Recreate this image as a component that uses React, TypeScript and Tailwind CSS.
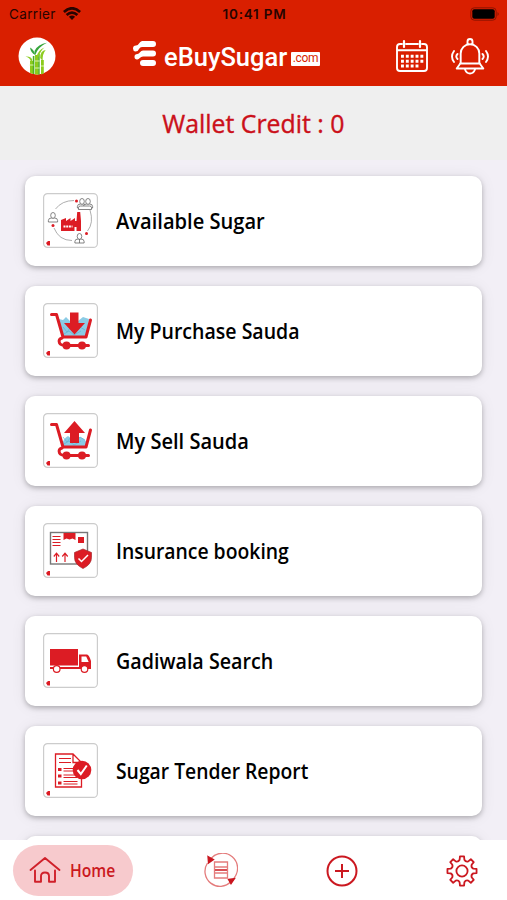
import type { ReactNode } from "react";

const RED = "#dc1c24";

function Wifi() {
  return (
    <svg width="18" height="14" viewBox="0 0 18 14" fill="none" stroke="#270400" strokeWidth="2.7">
      <path d="M.9 4.9Q9-2.3 17.1 4.9M3.6 8Q9 3.2 14.4 8" />
      <path d="M5.9 9.7Q9 7.1 12.1 9.7L9 13Z" fill="#270400" stroke="none" />
    </svg>
  );
}

function Battery() {
  return (
    <svg width="30" height="14" viewBox="0 0 30 14">
      <rect x=".8" y=".8" width="25.4" height="12.4" rx="3.5" fill="none" stroke="#8d1400" />
      <rect x="2.3" y="2.3" width="22.4" height="9.4" rx="2" fill="#000" />
      <path d="M27.5 5Q30 7 27.5 9Z" fill="#8d1400" />
    </svg>
  );
}

function Cane() {
  return (
    <svg width="38" height="38" viewBox="0 0 38 38">
      <circle cx="19" cy="19" r="18.5" fill="#fff" />
      <path d="M12 24h3.500v13q-1.800-.3-3.500-1.200zM17 18h3.500v19.500H17zM23 23h2.800v13.600q-1.300.6-2.800.8z" fill="#8ccb1c" />
      <path d="M14.800 19h1.600v18h-1.600zM20.200 17h1.500v20.500h-1.500z" fill="#4fae22" />
      <path d="M11 28h4.500M17 24h4.700M17 31h4.700M23 29h3" stroke="#efffd3" strokeWidth=".8" />
      <path d="M16.800 17Q16 12.500 12 10.500q.8 5.500 5.200 7.500Q20 10 29 5.800 20 7 16.500 14z" fill="#36a53c" />
      <path d="M18.500 20Q20 13 26.500 10.500q-4 3-6 9.500zM14.500 23.500q-1-4.500-7-4Q12 20.500 12.800 24.500zM22.200 21q0-7.500 5.500-8-3.500 4-3 11z" fill="#8dcc22" />
    </svg>
  );
}

function LogoMark() {
  return (
    <svg width="25" height="27" viewBox="0 0 25 27" fill="#fff">
      <path d="M10 1h11q3 0 3 3t-3 3H10Q8 7 7 9q-1 2.500-3.500 2.500A3 3 0 0 1 1 8.500q0-3 3-3 2 0 3-2t3-2.500zM11 10.500h10q3 0 3 3t-3 3H11q-2 0-3.200 1.600T5 19.500q-2.500 0-2.500-2.700T5.500 14q1.300 0 2.500-1.700t3-1.800zM11 20h10q3 0 3 3t-3 3H11q-3 0-3-3t3-3z" />
    </svg>
  );
}

function Calendar() {
  return (
    <svg width="34" height="34" viewBox="0 0 34 34" fill="none" stroke="#fff" strokeWidth="1.900" strokeLinecap="round">
      <path d="M7 5H5Q2 5 2 8v21q0 3 3 3h24q3 0 3-3V8q0-3-3-3h-2M11 5h12M2 11.300h30" />
      <path d="M9 2v6M25 2v6" strokeWidth="2.200" />
      <path
        d="M6 17.300h22.500M6 22.200h22.500M6 27h17.500"
        strokeWidth="2.900"
        strokeLinecap="butt"
        strokeDasharray="2.900 1.950"
      />
    </svg>
  );
}

function Bell() {
  return (
    <svg width="38" height="38" viewBox="0 0 38 38" fill="none" stroke="#fff" strokeWidth="1.900" strokeLinecap="round" strokeLinejoin="round">
      <path d="M16.500 7V4.500a2.500 2.500 0 0 1 5 0V7M9.700 26V16.500a9.300 9.300 0 0 1 18.600 0V26l4 5.500H5.700zM9 26.500h20M14 32.500q1.500 4 5 4t5-4" />
      <path d="M6.500 17q-2.500 2.500 0 5M3 14q-4 5.500 0 11M31.500 17q2.500 2.500 0 5M35 14q4 5.500 0 11" />
    </svg>
  );
}

/* Head and shoulders outline, 10 units wide, centred on the origin. */
function Person({ x, y }: { x: number; y: number }) {
  return (
    <g transform={`translate(${x} ${y})`} fill="#fff" stroke="#666" strokeWidth=".8">
      <path d="M-4.600 5V3.500Q-4.600 1-1.500 1h3q3.100 0 3.100 2.500V5z" />
      <ellipse cx="0" cy="-1.600" rx="2.300" ry="2.900" />
    </g>
  );
}

function FactoryArt() {
  return (
    <>
      <path d="M12.500 16Q19 7.500 31 7.500M47 17Q51 30 44.500 38M29 47.500Q16 47.500 11 35" fill="none" stroke="#999" strokeWidth=".8" />
      <g fill={RED}>
        <path d="M18 38V27l5-2v3l4.500-3v3l4.500-3v3h1.500l.7-9h3l.8 9V38z" />
        <circle cx="33.500" cy="8" r="1.500" />
        <circle cx="10" cy="32.500" r="1.500" />
        <circle cx="43.500" cy="40.500" r="1.500" />
      </g>
      <path d="M20.500 33.500h9" stroke="#fff" strokeWidth="2" strokeDasharray="2 .7" />
      <path d="M31.500 34h2v4h-2z" fill="#fff" />
      <Person x={10} y={24} />
      <Person x={39} y={10} />
      <Person x={45} y={10} />
      <path d="M35.500 16.500v-2q0-1.500 2-1.500h9q2 0 2 1.500v2z" fill="#fff" stroke="#666" strokeWidth=".8" />
      <Person x={36.500} y={45} />
      <path d="M36.500 46v4" stroke="#666" strokeWidth=".8" />
    </>
  );
}

function CartArt({ up }: { up?: boolean }) {
  return (
    <>
      <path
        d={up ? "M19 31q2-6 6-8l4 3 8-2q6 2 7 7l-1 3H20z" : "M16 16l4 1 3-3 5 5 7-1 5-4 6 2-3 18H20z"}
        fill="#8bcbe5"
      />
      <path d="M20 24l4 5 4-5 4 6 5-6 5 3M21 31l5-3 5 4 7-4" fill="none" stroke="#54aacd" strokeWidth=".8" opacity=".7" />
      <path d="M8.500 11.500h5L20 34h23L47.500 17M19 35q-4 1-2.500 5 1 2.500 7 2.500h22" fill="none" stroke={RED} strokeWidth="3" strokeLinecap="round" strokeLinejoin="round" />
      <circle cx="23.500" cy="42.500" r="4" fill={RED} />
      <circle cx="39" cy="42.500" r="4" fill={RED} />
      {up ? (
        <path d="M31.500 8l10.500 12h-6v10h-9V20h-6z" fill={RED} />
      ) : (
        <path d="M27 9.500h8.500V20H42L31.500 31.500 21 20h6z" fill={RED} />
      )}
    </>
  );
}

function InsuranceArt() {
  return (
    <>
      <rect x="7.500" y="9.500" width="37" height="31.500" fill="#fff" stroke="#777" strokeWidth="1.400" />
      <path d="M20.500 10h12v7l-3-1.500-3 1-3-1-3 1.500zM35 14h6v6h-6z" fill={RED} />
      <path d="M9.500 13.500h8M9.500 16.500h8M9.500 19.500h8M9.500 22.500h8M13.500 39v-8.500M22 39v-8.500M10.800 33.500l2.700-3.300 2.700 3.300M19.300 33.500l2.700-3.300 2.700 3.300" fill="none" stroke={RED} strokeWidth="1.200" />
      <path d="M40 26l8.500 3.500v5q0 7-8.500 11-8.500-4-8.500-11v-5z" fill={RED} stroke="#a52a2e" strokeWidth=".7" />
      <path d="M35.500 35.500l3 3 6.500-6.500" fill="none" stroke="#fff" strokeWidth="1.500" />
    </>
  );
}

function TruckArt() {
  return (
    <>
      <path d="M7 16h28v16.500H7zM7 34h39l1-1.500V36H7zM36 21.500h8q2 0 4 6.500v8H36z" fill={RED} />
      <path d="M38.500 23.500h4.700l2.500 5.500h-7.200z" fill="#fff" />
      <circle cx="13.700" cy="36" r="3.300" fill="#fff" stroke={RED} strokeWidth="1.200" />
      <circle cx="41.500" cy="36" r="3.300" fill="#fff" stroke={RED} strokeWidth="1.200" />
    </>
  );
}

function ReportArt() {
  return (
    <>
      <path d="M12.500 11h17.500l8.500 8.500V44h-26zM30 11v8.500h8.500" fill="#fff" stroke={RED} strokeWidth="1.300" />
      <path d="M16 15.500h12M16 19.500h12M20.500 25.500h14M20.500 28h14M20.500 32h14M20.500 34.500h14M20.500 38.500h14M20.500 41h14" stroke={RED} />
      <path d="M15 25h3.500v3H15zM15 31.500h3.500v3H15zM15 38.500h3.500v3H15z" fill={RED} />
      <circle cx="39" cy="27" r="9.300" fill={RED} />
      <path d="M34.500 27l3.300 4 6-8.500" fill="none" stroke="#fff" strokeWidth="2" />
    </>
  );
}

function Row({ art, label }: { art: ReactNode; label: ReactNode }) {
  return (
    <div className="flex h-[90px] shrink-0 items-center rounded-[10px] bg-white pl-[18px] shadow-[0_2px_5px_rgba(0,0,0,0.25),0_1px_16px_rgba(0,0,0,0.07)]">
      <svg width="55" height="55" viewBox="0 0 55 55" className="shrink-0">
        <rect x=".6" y=".6" width="53.800" height="53.800" rx="4" fill="#fff" stroke="#ccc" strokeWidth="1.200" />
        {art}
        <path d="M3 50l2-2h2v4.500H4.500z" fill={RED} />
      </svg>
      <div className="ml-[18px] whitespace-nowrap text-[21px] leading-[30px] font-semibold text-black">{label}</div>
    </div>
  );
}

function HomeIcon() {
  return (
    <svg width="32" height="28" viewBox="0 0 32 28" fill="none" stroke="#d0202a" strokeWidth="1.900" strokeLinecap="round" strokeLinejoin="round">
      <path d="M1.500 14L16 2l14.500 12M6 14.500v11.300h6V20q0-3.500 4-3.500t4 3.500v5.800h6V14.500" />
    </svg>
  );
}

function TransferIcon() {
  return (
    <svg width="34" height="34" viewBox="0 0 34 34" fill="none" stroke="#e47c7c" strokeWidth="1.300">
      <path d="M7 5.500A15 15 0 0 1 30 25M27 28.500A15 15 0 0 1 3.500 10" />
      <path d="M10.500 9h13v16h-13zM10.500 14h13M10.500 20h13" />
      <path d="M11 17h12" stroke="#d84f55" strokeWidth="2" />
      <path d="M4 3.500l5.500 3-5 3.500zM24.500 26.500l6-.8-3.500 5z" fill="#c9151e" stroke="#c9151e" />
    </svg>
  );
}

function PlusIcon() {
  return (
    <svg width="32" height="32" viewBox="0 0 32 32" fill="none" stroke="#cb1820" strokeWidth="2">
      <circle cx="16" cy="16" r="14.500" />
      <path d="M16 9v14M9 16h14" />
    </svg>
  );
}

const gearPath =
  Array.from({ length: 8 }, (_, i) => {
    const point = (deg: number, r: number) => {
      const a = ((i * 45 + deg - 90) * Math.PI) / 180;
      return `${(16 + r * Math.cos(a)).toFixed(2)} ${(16 + r * Math.sin(a)).toFixed(2)}`;
    };
    return `${i ? "L" : "M"}${point(-8, 14.7)}L${point(8, 14.7)}L${point(12, 11.5)}Q${point(22.5, 9.6)} ${point(33, 11.5)}`;
  }).join("") + "Z";

function GearIcon() {
  return (
    <svg width="32" height="32" viewBox="0 0 32 32" fill="none" stroke="#cb1820" strokeWidth="1.800" strokeLinejoin="round">
      <path d={gearPath} />
      <circle cx="16" cy="16" r="5.600" />
    </svg>
  );
}

export default function App() {
  return (
    <div className="flex h-[900px] w-[507px] flex-col overflow-hidden bg-[#f2eff6] font-['Open_Sans','Noto_Sans',sans-serif]">
      <header className="h-[86px] shrink-0 bg-[#d91f00]">
        <div className="grid h-[28px] grid-cols-3 items-center pr-[7px] pl-[9px] font-['Inter',sans-serif] text-[13.500px] text-[#270400]">
          <div className="flex items-center gap-[7px]">
            <span className="tracking-[0.35px]">Carrier</span>
            <Wifi />
          </div>
          <div className="text-center font-semibold tracking-[0.75px] whitespace-nowrap">10:41 PM</div>
          <div className="-mt-[1px] flex justify-end">
            <Battery />
          </div>
        </div>
        <div className="flex h-[56px] items-center pl-[18px]">
          <Cane />
          <div className="ml-[76px] flex w-[190px] items-center">
            <div className="-mt-[5px]">
              <LogoMark />
            </div>
            <div className="mt-[4px] ml-[7px] w-[127px] shrink-0">
              <span className="inline-block origin-left scale-x-[1.02] whitespace-nowrap font-['Roboto',sans-serif] text-[25px] leading-[30px] font-medium text-white">
                eBuySugar
              </span>
            </div>
            <div className="mt-[5px] flex h-[14px] w-[29px] shrink-0 items-center justify-center rounded-[1px] bg-white pb-[1px] font-['Roboto',sans-serif] text-[12px] tracking-[-0.3px] text-[#d91f00]">
              .com
            </div>
          </div>
          <div className="ml-[73px]">
            <Calendar />
          </div>
          <div className="ml-[22px]">
            <Bell />
          </div>
        </div>
      </header>
      <div className="flex h-[74px] shrink-0 items-center justify-center bg-[#efefef] text-[26px] text-[#cb101a] [-webkit-text-stroke:0.4px_#cb101a]">
        <span className="inline-block scale-x-[0.955] whitespace-nowrap">Wallet Credit : 0</span>
      </div>
      <main className="flex min-h-0 flex-1 flex-col gap-[20px] overflow-hidden px-[25px] pt-[15.500px]">
        <Row art={<FactoryArt />} label={<span className="inline-block origin-left scale-x-[0.957]">Available Sugar</span>} />
        <Row art={<CartArt />} label={<span className="inline-block origin-left scale-x-[0.93]">My Purchase Sauda</span>} />
        <Row art={<CartArt up />} label={<span className="inline-block origin-left scale-x-[0.955]">My Sell Sauda</span>} />
        <Row art={<InsuranceArt />} label={<span className="inline-block origin-left scale-x-[0.922]">Insurance booking</span>} />
        <Row art={<TruckArt />} label={<span className="inline-block origin-left scale-x-[0.937]">Gadiwala Search</span>} />
        <Row art={<ReportArt />} label={<span className="inline-block origin-left scale-x-[0.92]">Sugar Tender Report</span>} />
        <div className="h-[90px] shrink-0 rounded-[10px] bg-white shadow-[0_2px_5px_rgba(0,0,0,0.25),0_1px_16px_rgba(0,0,0,0.07)]" />
      </main>
      <nav className="flex h-[60px] shrink-0 items-center bg-white pl-[13px]">
        <div className="flex h-[51px] w-[120px] items-center rounded-full bg-[#f7cacd] pl-[16px]">
          <HomeIcon />
          <span className="ml-[9px] inline-block origin-left scale-x-[0.87] text-[18px] font-semibold text-[#cb1820]">Home</span>
        </div>
        <div className="ml-[71px]">
          <TransferIcon />
        </div>
        <div className="mt-[1px] ml-[88px]">
          <PlusIcon />
        </div>
        <div className="mt-[1px] ml-[88px]">
          <GearIcon />
        </div>
      </nav>
    </div>
  );
}
